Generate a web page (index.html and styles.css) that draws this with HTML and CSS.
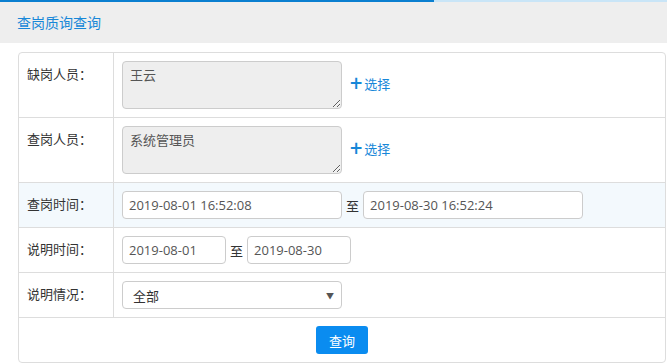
FILE: index.html
```html
<!DOCTYPE html>
<html lang="zh-CN">
<head>
    <meta charset="UTF-8">
    <title>查岗质询查询</title>
    <link rel="stylesheet" href="styles.css">
</head>
<body>
    <div class="progress"><div class="progress-bar"></div></div>
    <div class="page-header">查岗质询查询</div>

    <table class="form-table">
        <tr>
            <td class="label">缺岗人员：</td>
            <td>
                <div class="pick">
                    <textarea class="box" readonly>王云</textarea>
                    <a class="pick-link" href="#"><span class="plus">+</span>选择</a>
                </div>
            </td>
        </tr>
        <tr>
            <td class="label">查岗人员：</td>
            <td>
                <div class="pick">
                    <textarea class="box" readonly>系统管理员</textarea>
                    <a class="pick-link" href="#"><span class="plus">+</span>选择</a>
                </div>
            </td>
        </tr>
        <tr class="hover">
            <td class="label">查岗时间：</td>
            <td>
                <div class="range">
                    <input class="field wide" type="text" value="2019-08-01 16:52:08">
                    <span class="to">至</span>
                    <input class="field wide" type="text" value="2019-08-30 16:52:24">
                </div>
            </td>
        </tr>
        <tr>
            <td class="label">说明时间：</td>
            <td>
                <div class="range">
                    <input class="field short" type="text" value="2019-08-01">
                    <span class="to">至</span>
                    <input class="field short" type="text" value="2019-08-30">
                </div>
            </td>
        </tr>
        <tr>
            <td class="label">说明情况：</td>
            <td>
                <div class="select">
                    <span>全部</span>
                    <span class="caret">▼</span>
                </div>
            </td>
        </tr>
        <tr>
            <td class="actions" colspan="2">
                <button class="btn">查询</button>
            </td>
        </tr>
    </table>
</body>
</html>
```

FILE: styles.css
```css
body {
    margin: 0;
    font-family: "Noto Sans CJK SC", "Noto Sans", sans-serif;
    font-size: 13px;
    color: #333;
    background: #fff;
}
.progress {
    height: 2px;
    background: #c9e5f7;
}
.progress-bar {
    width: 434px;
    height: 2px;
    background: #0a7fd0;
}
.page-header {
    height: 41px;
    line-height: 41px;
    padding-left: 17px;
    background: #eee;
    color: #1787d8;
    font-size: 14px;
}
.form-table {
    margin: 9px 1px 0 18px;
    width: calc(100% - 19px);
    border: 1px solid #ddd;
    border-radius: 4px;
    border-spacing: 0;
}
.form-table td {
    padding: 8px;
    border-top: 1px solid #ddd;
    vertical-align: top;
}
.form-table tr:first-child td {
    border-top: none;
}
.form-table td.label {
    width: 78px;
    padding: 12px 8px;
    line-height: 17px;
    border-right: 1px solid #ddd;
}
.form-table tr.hover td {
    background: #f3f9fd;
}
.pick {
    display: flex;
    align-items: center;
    gap: 7px;
}
.box {
    box-sizing: border-box;
    width: 220px;
    height: 48px;
    margin: 0;
    padding: 4px 7px;
    border: 1px solid #ccc;
    border-radius: 4px;
    background: #eee;
    color: #555;
    font: 13px/18px "Noto Sans CJK SC", sans-serif;
}
.pick-link {
    color: #1787d8;
    text-decoration: none;
    margin-top: -4px;
}
.plus {
    font-family: "DejaVu Sans", sans-serif;
    font-weight: bold;
    font-size: 17px;
    margin-right: 1px;
}
.range {
    display: flex;
    align-items: center;
    gap: 4px;
}
.field {
    box-sizing: border-box;
    height: 28px;
    margin: 0;
    padding: 0 6px;
    border: 1px solid #ccc;
    border-radius: 4px;
    background: #fff;
    color: #555;
    font: 13px "Open Sans", "Noto Sans CJK SC", sans-serif;
}
.field.wide {
    width: 220px;
}
.field.short {
    width: 104px;
}
.to {
    color: #333;
}
.select {
    box-sizing: border-box;
    display: flex;
    justify-content: space-between;
    align-items: center;
    width: 220px;
    height: 28px;
    padding: 0 7px 0 10px;
    border: 1px solid #ccc;
    border-radius: 4px;
    color: #333;
}
.caret {
    font-size: 8px;
    color: #555;
}
.form-table td.actions {
    text-align: center;
    padding: 8px;
}
.btn {
    width: 52px;
    height: 28px;
    border: none;
    border-radius: 3px;
    background: #0a8cf0;
    color: #fff;
    font: 13px "Noto Sans CJK SC", sans-serif;
    cursor: pointer;
}
```
